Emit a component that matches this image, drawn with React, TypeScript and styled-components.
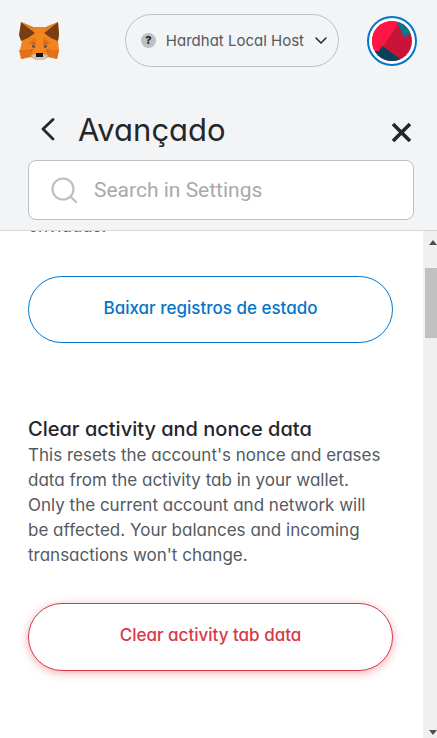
import React from "react";
import styled, { createGlobalStyle, css } from "styled-components";

const colors = {
  text: "#24272a",
  textAlt: "#535a61",
  muted: "#bbc0c5",
  primary: "#0376c9",
  danger: "#d73847",
  surface: "#f2f4f6",
};

const GlobalStyle = createGlobalStyle`
  *, *::before, *::after { box-sizing: border-box; }
  body {
    margin: 0;
    background: #fff;
    color: ${colors.text};
    font-family: Inter, "Liberation Sans", sans-serif;
    font-feature-settings: "cv11";
  }
  button, input { font: inherit; font-feature-settings: inherit; }
  h1, h2, p { margin: 0; }
`;

const Page = styled.div`
  display: flex;
  flex-direction: column;
  height: 100vh;
`;

const Header = styled.header`
  flex: none;
  background: ${colors.surface};
  border-bottom: 1px solid #d6d9dc;
  padding: 14px 20px 10px 18px;
`;

const TopBar = styled.div`
  display: flex;
  align-items: center;
  justify-content: space-between;
  height: 53px;
`;

const LogoButton = styled.button`
  display: flex;
  padding: 0;
  border: 0;
  background: none;
`;

const TopActions = styled.div`
  display: flex;
  align-items: center;
  gap: 28px;
`;

const NetworkButton = styled.button`
  display: flex;
  align-items: center;
  height: 53px;
  padding: 0 10px 0 15px;
  border: 1px solid ${colors.muted};
  border-radius: 27px;
  background: none;
  color: ${colors.textAlt};
  font-size: 15px;
  line-height: 20px;
  white-space: nowrap;
`;

const NetworkBadge = styled.span`
  display: grid;
  place-items: center;
  width: 15px;
  height: 15px;
  margin-right: 10px;
  border-radius: 50%;
  background: ${colors.muted};
  color: ${colors.text};
  font-size: 11px;
  font-weight: 800;
  line-height: 15px;
`;

const NetworkName = styled.span`
  margin-right: 10px;
  text-align: left;
`;

const AccountButton = styled.button`
  display: grid;
  place-items: center;
  width: 50px;
  height: 50px;
  padding: 0;
  border: 2px solid ${colors.primary};
  border-radius: 50%;
  background: #fff;
`;

const TitleRow = styled.div`
  display: flex;
  align-items: center;
  height: 40px;
  margin: 43px 0 10px;
  padding: 0 3px 0 22px;
`;

const IconButton = styled.button`
  display: flex;
  padding: 0;
  border: 0;
  background: none;
  color: ${colors.text};
`;

const Title = styled.h1`
  flex: 1;
  margin-left: 20px;
  font-size: 31px;
  font-weight: 400;
  line-height: 40px;
`;

const SearchBox = styled.label`
  display: flex;
  align-items: center;
  gap: 16px;
  height: 60px;
  margin: 0 3px 0 10px;
  padding: 0 22px;
  border: 1px solid ${colors.muted};
  border-radius: 8px;
  background: #fff;
`;

const SearchInput = styled.input`
  flex: 1;
  min-width: 0;
  padding: 0;
  border: 0;
  outline: 0;
  background: none;
  color: ${colors.text};
  font-family: Roboto, sans-serif;
  font-size: 21px;
  line-height: 28px;
  &::placeholder { color: #a9a9a9; opacity: 1; }
`;

const Body = styled.div`
  display: grid;
  grid-template-columns: minmax(0, 1fr) 14px;
  flex: 1;
  min-height: 0;
  overflow: hidden;
`;

const Content = styled.main`
  min-height: 0;
  overflow: hidden;
  padding: 0 30px 0 28px;
`;

const Section = styled.section<{ $scrolled?: boolean }>`
  margin-top: ${(p) => (p.$scrolled ? "-17px" : "73px")};
`;

const SectionTitle = styled.h2`
  font-size: 20px;
  font-weight: 500;
  line-height: 27px;
`;

const Description = styled.p`
  padding-right: 10px;
  color: ${colors.textAlt};
  font-size: 17px;
  line-height: 25px;
`;

const ActionButton = styled.button<{ $danger?: boolean }>`
  display: block;
  width: 100%;
  height: 67px;
  margin-top: 37px;
  padding: 0 16px 4px;
  border: 1px solid ${colors.primary};
  border-radius: 34px;
  background: #fff;
  color: ${colors.primary};
  font-size: 17px;
  font-weight: 500;
  line-height: 24px;
  ${(p) =>
    p.$danger &&
    css`
      height: 68px;
      margin-top: 35px;
      border-color: ${colors.danger};
      color: ${colors.danger};
      box-shadow: 0 2px 10px rgba(215, 56, 71, 0.4);
    `}
`;

const ScrollTrack = styled.div`
  display: flex;
  flex-direction: column;
  align-items: flex-end;
  overflow: hidden;
  padding: 9px 0 3px;
  background: #f0f0f0;
`;

const ScrollThumb = styled.div`
  width: 12px;
  height: 70px;
  margin: 23px 0 auto;
  background: #c1c1c1;
`;

const FoxLogo = () => (
  <svg width="43" height="40" viewBox="0 0 43 40" aria-hidden="true">
    <path d="M3 1 15 6h13L40 1l1 10-1 9 1 9-2 9-9-2-5 3h-7l-5-3-9 2-2-9 2-9-1-9z" fill="#f08421" />
    <path d="M3 1 17 12 10 17 3 20 1 14z" fill="#763d16" />
    <path d="M40 1 26 12l7 5 7 3 1-6z" fill="#763d16" />
    <path d="m3 1 12 5 2 6zM40 1 28 6l-2 6z" fill="#e67a22" />
    <path d="m17 12-2 8 3 12h7l3-12-2-8z" fill="#f6851b" />
    <path d="m17 16-6 6 6 2 1-4zM26 16l6 6-6 2-1-4z" fill="#e2761b" />
    <path d="M1 29h10l4 6-12 3zM41 29H32l-4 6 11 3z" fill="#e2711f" />
    <path d="m11 22 6-1 1 4-4-2zM32 22l-6-1-1 4 4-2z" fill="#d2601a" />
    <path d="m11 29 4-1-1 4zM32 29l-4-1 1 4z" fill="#cd6116" />
    <path d="m13 34 5-1h7l5 1-2 3-3 2h-7l-3-2z" fill="#d5bfb2" />
    <path d="m14 24 3 1v2l-3-1zM29 24l-3 1v2l3-1z" fill="#524b47" />
    <path d="M18 32h7v4h-7z" fill="#161616" />
  </svg>
);

const Avatar = () => (
  <svg width="40" height="40" viewBox="0 0 40 40" aria-hidden="true">
    <clipPath id="avatar-circle"><circle cx="20" cy="20" r="20" /></clipPath>
    <g clipPath="url(#avatar-circle)">
      <path d="M0 0h40v40H0z" fill="#c81439" />
      <path d="M0 0h24l2 3L8 30l-8 2z" fill="#ff1645" />
      <path d="M24-1 32 16l10-5V-1z" fill="#067a8c" />
      <path d="M0 30h7l3-5 20 14-3 3H0z" fill="#06425c" />
    </g>
  </svg>
);

const ScrollArrow = ({ down }: { down?: boolean }) => (
  <svg width="8" height="5" viewBox="0 0 8 5" aria-hidden="true">
    <path d={down ? "M0 0h8L4 5z" : "M0 5h8L4 0z"} fill="#505050" />
  </svg>
);

export default function App() {
  return (
    <>
      <GlobalStyle />
      <Page>
        <Header>
          <TopBar>
            <LogoButton aria-label="MetaMask"><FoxLogo /></LogoButton>
            <TopActions>
              <NetworkButton>
                <NetworkBadge>?</NetworkBadge>
                <NetworkName>Hardhat Local Host</NetworkName>
                <svg width="14" height="8" viewBox="0 0 14 8" fill="none" aria-hidden="true">
                  <path d="m2 1 5 5 5-5" stroke={colors.text} strokeWidth="1.5" strokeLinecap="round" strokeLinejoin="round" />
                </svg>
              </NetworkButton>
              <AccountButton aria-label="Account"><Avatar /></AccountButton>
            </TopActions>
          </TopBar>
          <TitleRow>
            <IconButton aria-label="Back">
              <svg width="18" height="24" viewBox="0 0 18 24" fill="none" aria-hidden="true">
                <path d="M13 1.5 3 11l10 10" stroke="currentColor" strokeWidth="2.8" strokeLinecap="round" strokeLinejoin="round" />
              </svg>
            </IconButton>
            <Title>Avançado</Title>
            <IconButton aria-label="Close">
              <svg width="24" height="24" viewBox="0 0 24 24" fill="none" aria-hidden="true">
                <path d="m3 6 17 17M20 6 3 23" stroke="currentColor" strokeWidth="3.6" />
              </svg>
            </IconButton>
          </TitleRow>
          <SearchBox>
            <svg width="27" height="27" viewBox="0 0 27 27" fill="none" aria-hidden="true">
              <circle cx="12" cy="12" r="10.5" stroke={colors.muted} strokeWidth="2.2" />
              <path d="m19.5 19.5 5.5 5.5" stroke={colors.muted} strokeWidth="2.4" strokeLinecap="round" />
            </svg>
            <SearchInput type="text" aria-label="Search in Settings" placeholder="Search in Settings" />
          </SearchBox>
        </Header>
        <Body>
          <Content>
            <Section $scrolled>
              <Description>enviadas.</Description>
              <ActionButton>Baixar registros de estado</ActionButton>
            </Section>
            <Section>
              <SectionTitle>Clear activity and nonce data</SectionTitle>
              <Description>
                This resets the account's nonce and erases data from the activity tab in your wallet. Only the current
                account and network will be affected. Your balances and incoming transactions won't change.
              </Description>
              <ActionButton $danger>Clear activity tab data</ActionButton>
            </Section>
          </Content>
          <ScrollTrack aria-hidden="true">
            <ScrollArrow />
            <ScrollThumb />
            <ScrollArrow down />
          </ScrollTrack>
        </Body>
      </Page>
    </>
  );
}
